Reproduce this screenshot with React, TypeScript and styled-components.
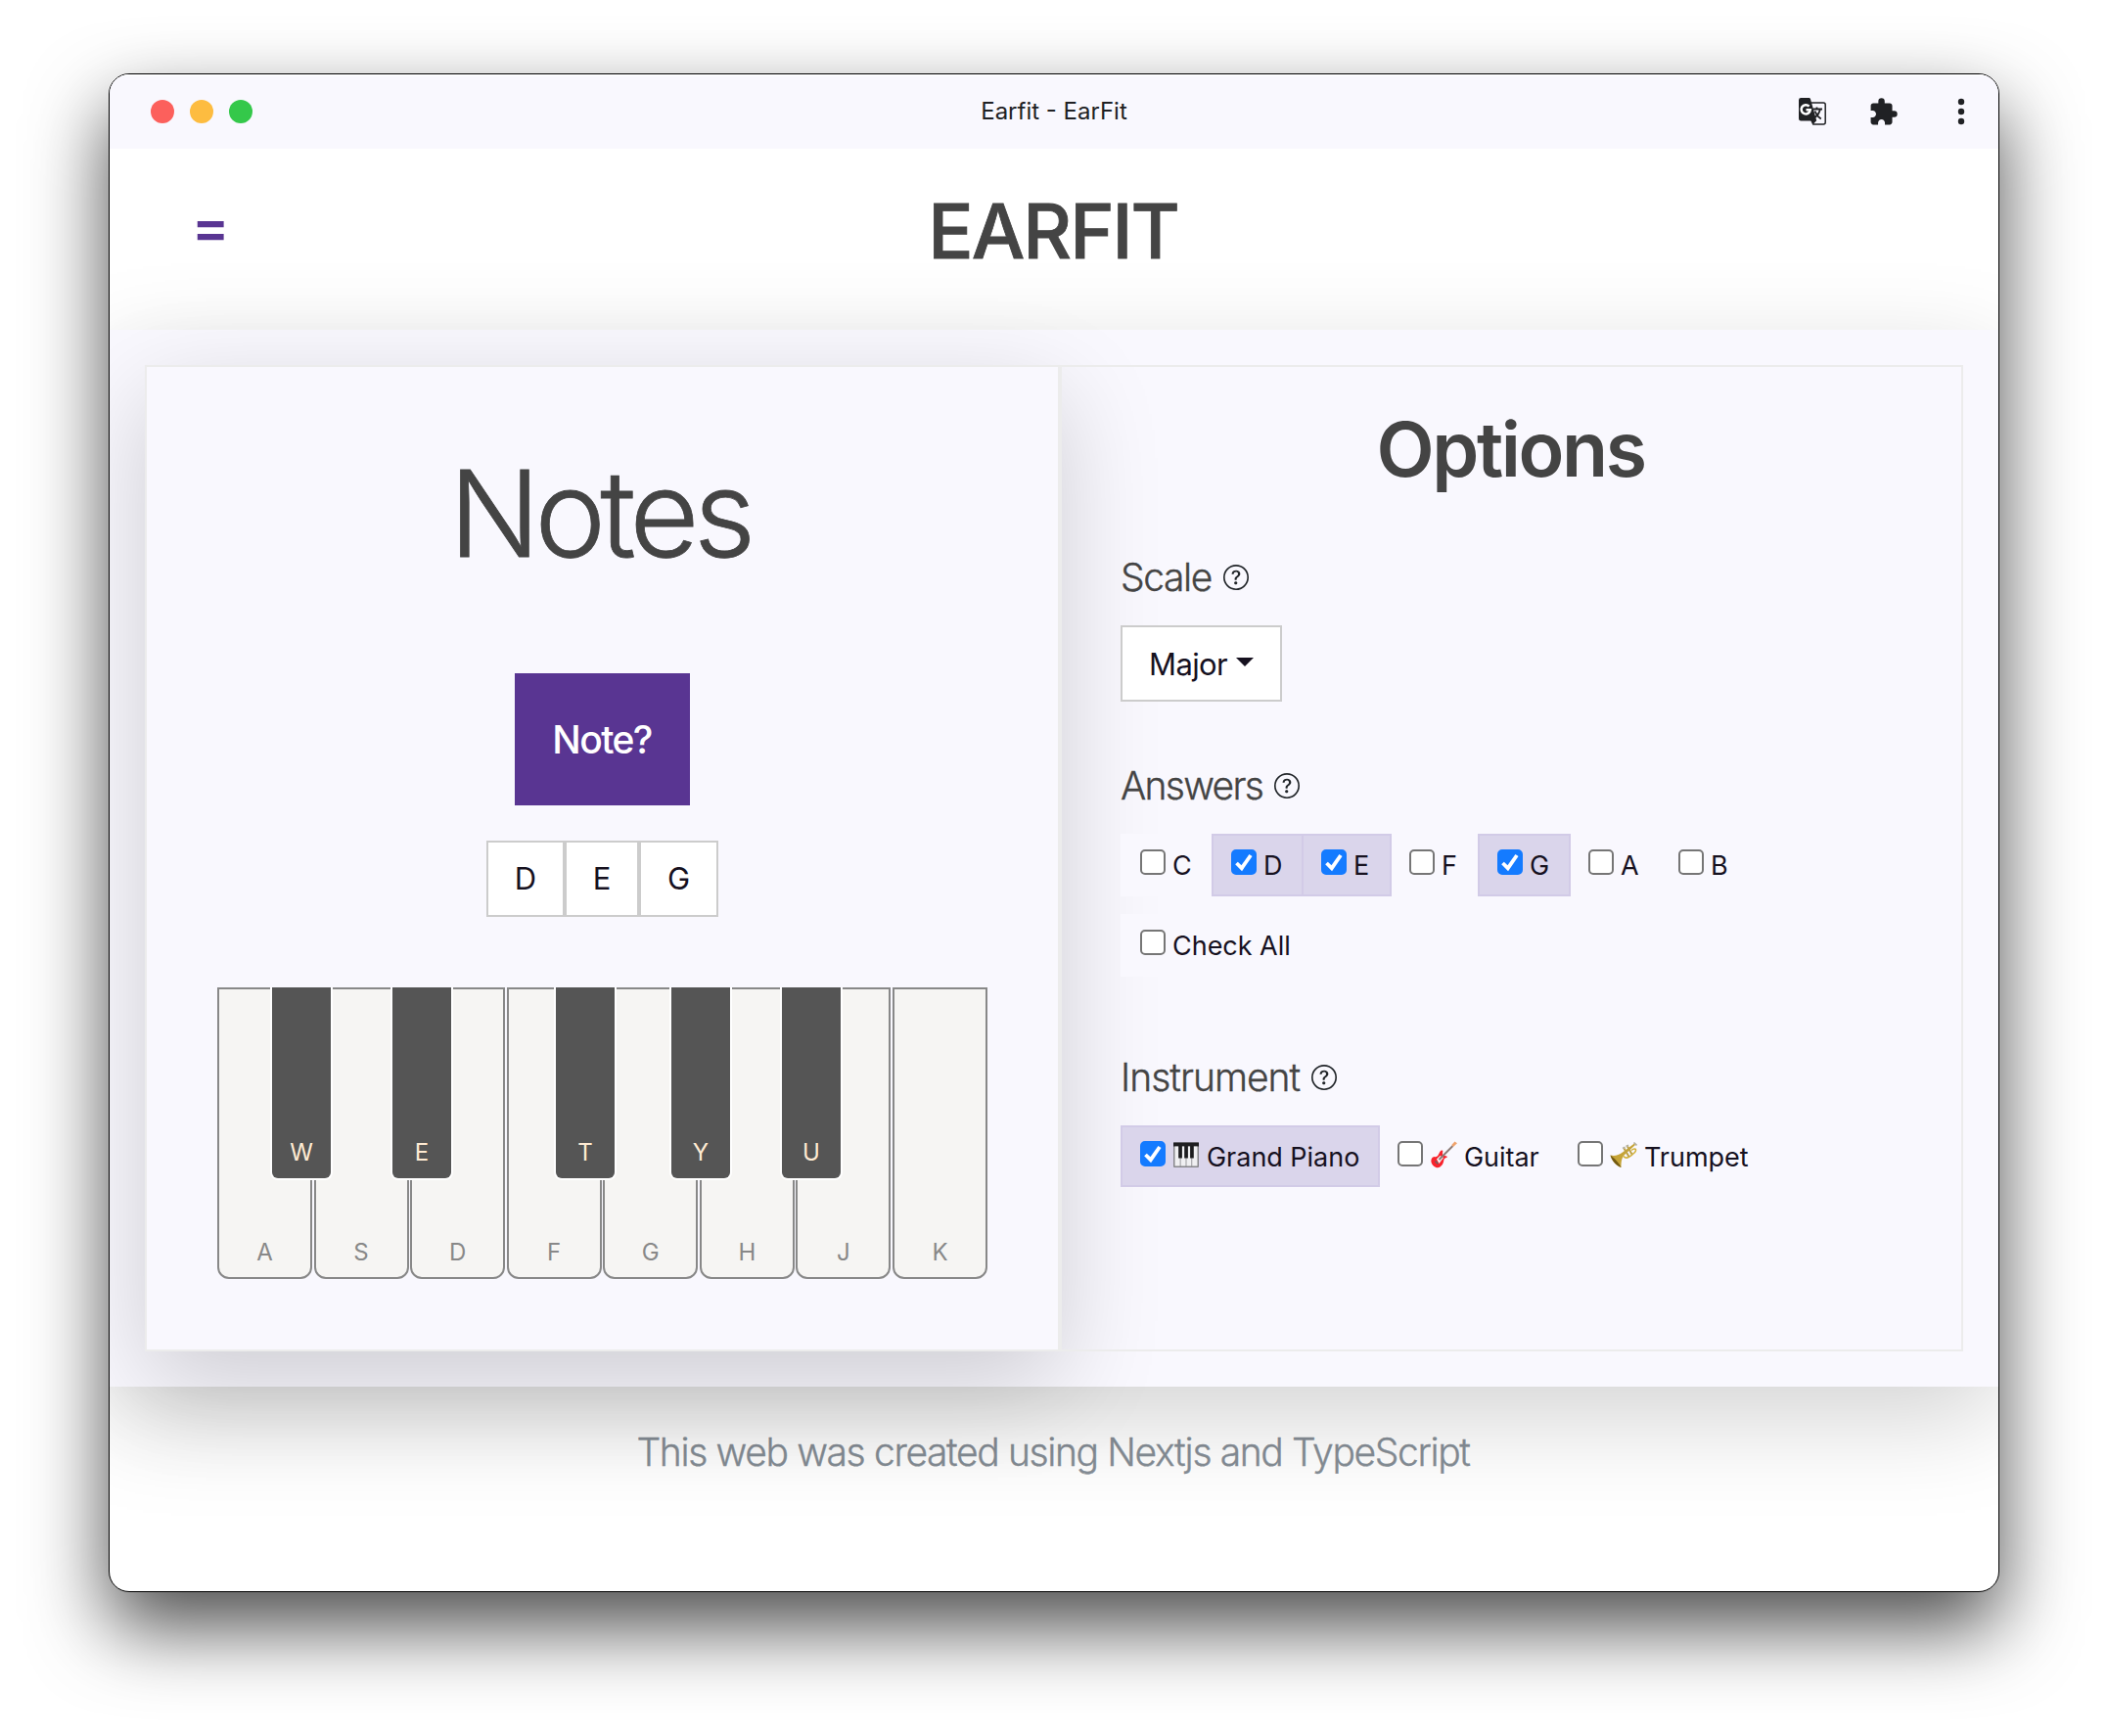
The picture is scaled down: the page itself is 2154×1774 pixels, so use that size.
import React from "react";
import styled, { createGlobalStyle, css } from "styled-components";

const GlobalStyle = createGlobalStyle`
  * { box-sizing: border-box; }
  body { margin: 0; background: #fff; }
  #root { font-family: Inter, "Liberation Sans", sans-serif; color: #16111f; }
`;

const Desktop = styled.div`
  width: 2154px;
  height: 1774px;
  padding: 75px 111px 0;
  overflow: hidden;
`;

const Window = styled.div`
  width: 1932px;
  height: 1552px;
  border: 1px solid #000;
  border-radius: 21px;
  background: #fff;
  box-shadow: 0 36px 80px rgba(0, 0, 0, 0.7);
`;

const Viewport = styled.div`
  height: 100%;
  border-radius: 20px;
  overflow: hidden;
  display: flex;
  flex-direction: column;
`;

const TitleBar = styled.div`
  flex: none;
  height: 76px;
  background: #f9f8fe;
  box-shadow: inset 0 2px 0 #fdfdff;
  display: grid;
  grid-template-columns: 1fr auto 1fr;
  align-items: center;
`;

const Lights = styled.div`
  display: flex;
  gap: 16px;
  padding-left: 42px;
`;

const Light = styled.span<{ $color: string }>`
  width: 24px;
  height: 24px;
  border-radius: 50%;
  background: ${(p) => p.$color};
`;

const WindowTitle = styled.div`
  font-size: 24px;
  line-height: 30px;
  color: #202124;
`;

const Actions = styled.div`
  display: flex;
  justify-content: flex-end;
  align-items: center;
  padding-right: 34px;
`;

const Header = styled.header`
  flex: none;
  height: 185px;
  padding: 0 88px;
  display: grid;
  grid-template-columns: 1fr auto 1fr;
  align-items: start;
`;

const MenuButton = styled.span`
  justify-self: start;
  margin: 52px 0 0 -4px;
  font-size: 57px;
  line-height: 56px;
  font-weight: 600;
  color: #593592;
`;

const Brand = styled.h1`
  margin: 36px 0 0;
  padding-right: 2px;
  font-size: 77px;
  line-height: 96px;
  font-weight: 500;
  letter-spacing: -2px;
  -webkit-text-stroke: 0.8px #444;
  color: #444;
`;

const Main = styled.main`
  flex: none;
  position: relative;
  z-index: 1;
  height: 1080px;
  padding: 36px;
  display: flex;
  background: #f9f8fe;
  box-shadow: 0 32px 96px rgba(0, 0, 0, 0.175);
`;

const Card = styled.section`
  border: 2px solid #ececec;
  height: 1008px;
`;

const NotesCard = styled(Card)`
  width: 935px;
  position: relative;
  background: #f9f8fe;
  box-shadow: 0 32px 96px rgba(0, 0, 0, 0.175);
  display: flex;
  flex-direction: column;
  align-items: center;
`;

const OptionsCard = styled(Card)`
  position: relative;
  width: 923px;
  padding-left: 60px;
`;

const NotesTitle = styled.h2`
  margin: 73px 0 0;
  padding-right: 6px;
  font-size: 123px;
  line-height: 154px;
  font-weight: 300;
  letter-spacing: -5.8px;
  -webkit-text-stroke: 0.8px #444;
  color: #444;
`;

const AskButton = styled.button`
  margin: 86px 0 0;
  width: 179px;
  height: 135px;
  padding: 0 1px 0 0;
  border: 0;
  background: #593592;
  color: #fff;
  font: 500 39px/48px Inter, "Liberation Sans", sans-serif;
  letter-spacing: -1.6px;
`;

const AnswerRow = styled.div`
  display: flex;
  margin-top: 36px;
`;

const AnswerButton = styled.button<{ $width: number }>`
  width: ${(p) => p.$width}px;
  height: 78px;
  padding: 0;
  border: 2px solid #ccc;
  background: #fff;
  color: #16111f;
  font: 400 31px/40px Inter, "Liberation Sans", sans-serif;
`;

const Piano = styled.div`
  position: relative;
  margin-top: 72px;
  width: 787px;
  height: 298px;
  display: flex;
  justify-content: space-between;
`;

const keyLabel = css`
  display: flex;
  align-items: flex-end;
  justify-content: center;
  font-size: 24px;
  line-height: 28px;
`;

const WhiteKey = styled.div`
  ${keyLabel}
  width: 97px;
  height: 298px;
  padding-bottom: 11px;
  border: 2px solid #888;
  border-radius: 0 0 12px 12px;
  background: #f6f5f3;
  color: #888;
`;

const BlackKey = styled.div<{ $left: number }>`
  ${keyLabel}
  position: absolute;
  top: 0;
  left: ${(p) => p.$left}px;
  width: 64px;
  height: 197px;
  padding-bottom: 12px;
  border: 2px solid #fff;
  border-top: 0;
  border-radius: 0 0 8px 8px;
  background: #555;
  color: #ffebd3;
`;

const OptionsTitle = styled.h2`
  margin: 36px 62px 0 0;
  font-size: 77px;
  line-height: 96px;
  font-weight: 600;
  letter-spacing: -2.4px;
  text-align: center;
  color: #444;
`;

const Label = styled.h3<{ $top: number; $spacing: number }>`
  margin: ${(p) => p.$top}px 0 0;
  display: flex;
  align-items: center;
  gap: 12px;
  height: 48px;
  font-size: 39px;
  line-height: 48px;
  font-weight: 300;
  letter-spacing: ${(p) => p.$spacing}px;
  -webkit-text-stroke: 0.35px #444;
  color: #444;
`;

const Select = styled.button`
  margin-top: 25px;
  width: 165px;
  height: 78px;
  padding: 2px 27px 0 27px;
  border: 2px solid #ccc;
  background: #fff;
  color: #16111f;
  font: 400 31px/40px Inter, "Liberation Sans", sans-serif;
  letter-spacing: -0.6px;
  display: flex;
  align-items: center;
  justify-content: space-between;
`;

const Caret = styled.span`
  border: 9px solid transparent;
  border-top-color: #16111f;
  border-bottom: 0;
  margin-top: -5px;
`;

const Choices = styled.div<{ $top: number }>`
  display: flex;
  margin-top: ${(p) => p.$top}px;
`;

const Choice = styled.label<{ $checked?: boolean; $width: number; $height?: number }>`
  flex: none;
  width: ${(p) => p.$width}px;
  height: ${(p) => p.$height ?? 64}px;
  margin-right: -2px;
  padding: 14px 0 0 18px;
  display: flex;
  gap: 8px;
  border: 2px solid ${(p) => (p.$checked ? "#d2cbe7" : "#f9f8fe")};
  background: ${(p) => (p.$checked ? "#dad5eb" : "#f9f8fe")};
  position: relative;
  z-index: ${(p) => (p.$checked ? 1 : 0)};
`;

const Box = styled.span<{ $checked?: boolean }>`
  flex: none;
  width: 26px;
  height: 26px;
  border: 2px solid ${(p) => (p.$checked ? "#147bff" : "#767676")};
  border-radius: 5px;
  background: ${(p) => (p.$checked ? "#147bff" : "#fff")};
  svg { display: block; }
`;

const ChoiceText = styled.span`
  margin: 1px 0 0 -1px;
  font-size: 27px;
  line-height: 32px;
  letter-spacing: -0.03px;
  white-space: nowrap;
`;

const Emoji = styled.svg`
  flex: none;
  width: 28px;
  height: 28px;
  margin-left: -1px;
`;

const Footer = styled.footer`
  padding: 43px 2px 0 0;
  text-align: center;
  font-size: 39px;
  line-height: 48px;
  font-weight: 300;
  letter-spacing: -1.37px;
  -webkit-text-stroke: 0.35px #868e96;
  color: #868e96;
`;

const ToolbarIcon = styled.svg<{ $gap?: number }>`
  flex: none;
  margin-right: ${(p) => p.$gap ?? 0}px;
`;

const Check = ({ on }: { on?: boolean }) => (
  <Box $checked={on}>
    {on && (
      <svg width="22" height="22" viewBox="0 0 22 22">
        <path d="M3.500 12 8.800 17.200 18 4" fill="none" stroke="#fff" strokeWidth="3.8" />
      </svg>
    )}
  </Box>
);

const Help = () => (
  <svg width="26" height="26" viewBox="0 0 16 16" fill="#212529">
    <path d="M8 15A7 7 0 1 1 8 1a7 7 0 0 1 0 14zm0 1A8 8 0 1 0 8 0a8 8 0 0 0 0 16z" />
    <path d="M5.255 5.786a.237.237 0 0 0 .241.247h.825c.138 0 .248-.113.266-.25.09-.656.54-1.134 1.342-1.134.686 0 1.314.343 1.314 1.168 0 .635-.374.927-.965 1.371-.673.489-1.206 1.06-1.168 1.987l.003.217a.25.25 0 0 0 .25.246h.811a.25.25 0 0 0 .25-.25v-.105c0-.718.273-.927 1.01-1.486.609-.463 1.244-.977 1.244-2.056 0-1.511-1.276-2.241-2.673-2.241-1.267 0-2.655.59-2.75 2.286zm1.557 5.763c0 .533.425.927 1.01.927.609 0 1.028-.394 1.028-.927 0-.552-.42-.94-1.029-.94-.584 0-1.009.388-1.009.94z" />
  </svg>
);

const TranslateIcon = () => (
  <ToolbarIcon width="28" height="28" viewBox="0 0 28 28" $gap={43}>
    <path d="M12.5 5H25.2a2 2 0 0 1 2 2V25a2 2 0 0 1-2 2H14.8L12.5 22" fill="none" stroke="#202124" strokeWidth="1.5" />
    <path d="M14.5 11.500H24M18.500 9.500V11.500M21.800 11.500C21.200 15.500 18.500 18.500 16.500 20M16.500 13.500C18 17.500 20.500 20 22.800 21.500" fill="none" stroke="#202124" strokeWidth="1.8" />
    <path d="M2.300 0H10.500Q11.600 0 12 1.200L18.200 23.200 14.500 27 13 23.500H2.300Q0 23.500 0 21.200V2.300Q0 0 2.300 0Z" fill="#202124" />
    <path d="M10.600 8.700A4.600 4.600 0 1 0 11.800 12.200H7.500" fill="none" stroke="#fff" strokeWidth="2.500" />
  </ToolbarIcon>
);

const PuzzleIcon = () => (
  <ToolbarIcon width="31" height="31" viewBox="0 0 24 24" fill="#202124" $gap={60}>
    <path d="M20.500 11H19V7c0-1.100-.9-2-2-2h-4V3.500a2.500 2.500 0 0 0-5 0V5H4c-1.100 0-1.990.9-1.990 2v3.800H3.500c1.490 0 2.700 1.210 2.700 2.700s-1.210 2.700-2.700 2.700H2V20c0 1.100.9 2 2 2h3.800v-1.500c0-1.490 1.210-2.700 2.700-2.700s2.700 1.210 2.700 2.700V22H17c1.100 0 2-.9 2-2v-4h1.500a2.500 2.500 0 0 0 0-5z" />
  </ToolbarIcon>
);

const DotsIcon = () => (
  <ToolbarIcon width="8" height="28" viewBox="0 0 8 28" fill="#202124">
    <circle cx="4" cy="4" r="3.2" />
    <circle cx="4" cy="14" r="3.2" />
    <circle cx="4" cy="24" r="3.2" />
  </ToolbarIcon>
);

const PianoEmoji = () => (
  <Emoji viewBox="0 0 28 28">
    <rect x="1" y="1.500" width="26" height="25.500" rx="1" fill="#87878b" />
    <rect x="1" y="1.500" width="26" height="4" fill="#1f1f21" />
    <path d="M2.500 5.500H7.700V25.500H2.500ZM8.500 5.500H13.600V25.500H8.500ZM14.400 5.500H19.400V25.500H14.400ZM20.200 5.500H25.500V25.500H20.200Z" fill="#f0f0f2" />
    <path d="M6.200 5H9.900V17.500H6.200ZM12.200 5H15.900V17.500H12.200ZM18.100 5H21.800V17.500H18.100Z" fill="#1c1c1e" />
  </Emoji>
);

const GuitarEmoji = () => (
  <Emoji viewBox="0 0 28 28">
    <path d="M2.500 17C4.500 15.500 7 17 8.500 14.500S10.500 9.500 12.500 9.500C14.500 10 12 12.500 13.500 14S17.500 15 17.800 16 16 17 15 18 14.500 22 12.500 24.500 8 28.500 4.500 26 .500 19 2.500 17Z" fill="#f8222c" />
    <path d="M7 18.500 10.500 15 14 17 9.500 23Z" fill="#f7f1f1" />
    <path d="M9.500 19 23.500 5" stroke="#8b7a75" strokeWidth="2" />
    <path d="M22.300 4 25.500.500 28 2.300 24 6Z" fill="#f0a36c" />
    <path d="M5.500 20.500 8.500 23.500" stroke="#666" strokeWidth="1.6" />
  </Emoji>
);

const TrumpetEmoji = () => (
  <Emoji viewBox="0 0 28 28">
    <path d="M.5 14.500C5 15.500 9 14.500 13 11.500L25 2.500 26 4 14.500 14.500C12 17.500 11.500 21 11.500 27 7 25.500 2 20.500.500 14.500Z" fill="#c6a437" />
    <path d="M.5 14.500C4 17 9.500 22.500 11.500 27 7 25.500 2 20.500.500 14.500Z" fill="#735a12" />
    <path d="M14 15.500C17 19.500 22 15 25.500 11.500 28 8.500 25.500 6.500 22 9.500" fill="none" stroke="#d3b23c" strokeWidth="1.6" />
    <path d="M14.500 7.500 19.500 16M18 5.500 22.500 13.500" fill="none" stroke="#bfa244" strokeWidth="2" />
    <path d="M24.500 1.500 27.500 4.500M13 7.500 15.500 6.300M16.500 5.500 19 4.300" stroke="#b3ae9b" strokeWidth="1.6" />
  </Emoji>
);

const whiteKeys = ["A", "S", "D", "F", "G", "H", "J", "K"];
const blackKeys: [string, number][] = [["W", 54], ["E", 177], ["T", 344], ["Y", 462], ["U", 575]];
const answers: [string, number, boolean][] = [
  ["C", 95, false],
  ["D", 94, true],
  ["E", 92, true],
  ["F", 92, false],
  ["G", 95, true],
  ["A", 94, false],
  ["B", 93, false],
];

export default function App() {
  return (
    <Desktop>
      <GlobalStyle />
      <Window>
        <Viewport>
          <TitleBar>
            <Lights>
              <Light $color="#fc605c" />
              <Light $color="#fdbc40" />
              <Light $color="#34c84a" />
            </Lights>
            <WindowTitle>Earfit - EarFit</WindowTitle>
            <Actions>
              <TranslateIcon />
              <PuzzleIcon />
              <DotsIcon />
            </Actions>
          </TitleBar>
          <Header>
            <MenuButton>=</MenuButton>
            <Brand>EARFIT</Brand>
          </Header>
          <Main>
            <NotesCard>
              <NotesTitle>Notes</NotesTitle>
              <AskButton>Note?</AskButton>
              <AnswerRow>
                <AnswerButton $width={80}>D</AnswerButton>
                <AnswerButton $width={76}>E</AnswerButton>
                <AnswerButton $width={81}>G</AnswerButton>
              </AnswerRow>
              <Piano>
                {whiteKeys.map((k) => (
                  <WhiteKey key={k}>{k}</WhiteKey>
                ))}
                {blackKeys.map(([k, left]) => (
                  <BlackKey key={k} $left={left}>{k}</BlackKey>
                ))}
              </Piano>
            </NotesCard>
            <OptionsCard>
              <OptionsTitle>Options</OptionsTitle>
              <Label $top={59} $spacing={-1.4}>Scale <Help /></Label>
              <Select>Major <Caret /></Select>
              <Label $top={62} $spacing={-1.7}>Answers <Help /></Label>
              <Choices $top={25}>
                {answers.map(([name, width, on]) => (
                  <Choice key={name} $width={width} $checked={on}>
                    <Check on={on} />
                    <ChoiceText>{name}</ChoiceText>
                  </Choice>
                ))}
              </Choices>
              <Choices $top={18}>
                <Choice $width={194}>
                  <Check />
                  <ChoiceText>Check All</ChoiceText>
                </Choice>
              </Choices>
              <Label $top={79} $spacing={-1}>Instrument <Help /></Label>
              <Choices $top={25}>
                <Choice $width={265} $height={63} $checked>
                  <Check on />
                  <PianoEmoji />
                  <ChoiceText>Grand Piano</ChoiceText>
                </Choice>
                <Choice $width={186} $height={63}>
                  <Check />
                  <GuitarEmoji />
                  <ChoiceText>Guitar</ChoiceText>
                </Choice>
                <Choice $width={214} $height={63}>
                  <Check />
                  <TrumpetEmoji />
                  <ChoiceText>Trumpet</ChoiceText>
                </Choice>
              </Choices>
            </OptionsCard>
          </Main>
          <Footer>This web was created using Nextjs and TypeScript</Footer>
        </Viewport>
      </Window>
    </Desktop>
  );
}
